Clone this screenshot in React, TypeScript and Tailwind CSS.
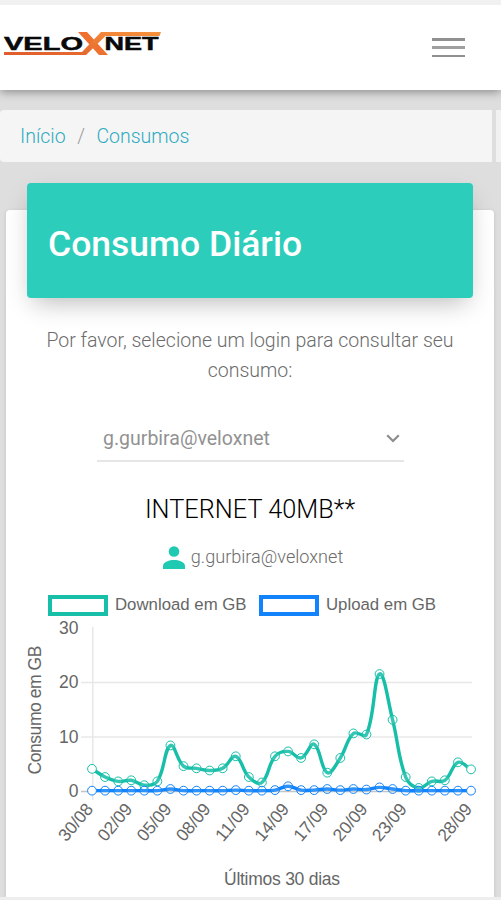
const DOWNLOAD = [
  4.1, 2.6, 1.8, 2.0, 1.1, 1.8, 8.4, 4.6, 4.2, 3.8, 4.2, 6.4, 2.6, 1.6, 6.4, 7.3,
  6.1, 8.6, 3.4, 6.1, 10.6, 10.4, 21.5, 13.1, 2.6, 0.6, 1.8, 2.0, 5.3, 4.0,
];

const UPLOAD = [
  0.1, 0.1, 0.1, 0.1, 0.1, 0.1, 0.4, 0.1, 0.1, 0.1, 0.1, 0.2, 0.1, 0.1, 0.2, 0.9,
  0.2, 0.2, 0.4, 0.2, 0.4, 0.3, 0.7, 0.4, 0.1, 0.1, 0.1, 0.1, 0.1, 0.1,
];

const LABELS = [
  { index: 0, text: "30/08" },
  { index: 3, text: "02/09" },
  { index: 6, text: "05/09" },
  { index: 9, text: "08/09" },
  { index: 12, text: "11/09" },
  { index: 15, text: "14/09" },
  { index: 18, text: "17/09" },
  { index: 21, text: "20/09" },
  { index: 24, text: "23/09" },
  { index: 29, text: "28/09" },
];

const TEAL = "#17bfa9";
const BLUE = "#1283fb";

type Point = { x: number; y: number };

const xAt = (i: number) => 86 + i * 13.07;
const yAt = (value: number) => 174.2 - value * 5.45;

function toPoints(values: number[]): Point[] {
  return values.map((v, i) => ({ x: xAt(i), y: yAt(v) }));
}

/** Cubic spline with a tension of 0.4, clamped to the bottom of the plot area. */
function splinePath(points: Point[]) {
  const controls = points.map((p, i) => {
    const prev = points[Math.max(i - 1, 0)];
    const next = points[Math.min(i + 1, points.length - 1)];
    const d01 = Math.hypot(p.x - prev.x, p.y - prev.y);
    const d12 = Math.hypot(next.x - p.x, next.y - p.y);
    const fa = (0.4 * d01) / (d01 + d12);
    const fb = (0.4 * d12) / (d01 + d12);
    const clamp = (y: number) => Math.min(y, yAt(0));
    return {
      before: { x: p.x - fa * (next.x - prev.x), y: clamp(p.y - fa * (next.y - prev.y)) },
      after: { x: p.x + fb * (next.x - prev.x), y: clamp(p.y + fb * (next.y - prev.y)) },
    };
  });

  return points.reduce((path, p, i) => {
    if (i === 0) return `M${p.x} ${p.y}`;
    const a = controls[i - 1].after;
    const b = controls[i].before;
    return `${path} C${a.x} ${a.y} ${b.x} ${b.y} ${p.x} ${p.y}`;
  }, "");
}

function Series({ values, color }: { values: number[]; color: string }) {
  const points = toPoints(values);
  return (
    <g fill="none" stroke={color}>
      <path d={splinePath(points)} strokeWidth={3.4} strokeLinejoin="round" />
      {points.map((p, i) => (
        <circle
          key={i}
          cx={p.x}
          cy={p.y}
          r={4.4}
          strokeWidth={1}
          fill={i === 0 || i === points.length - 1 ? "#fff" : "rgba(255,255,255,0.12)"}
        />
      ))}
    </g>
  );
}

function UsageChart() {
  return (
    <svg
      width="488"
      height="280"
      viewBox="0 0 488 280"
      className="block shrink-0 font-['Liberation_Sans',Arial,sans-serif] text-[17.5px]"
      fill="#666"
    >
      {[0, 10, 20].map((v) => (
        <line
          key={v}
          x1={75}
          x2={466}
          y1={yAt(v) + 0.3}
          y2={yAt(v) + 0.3}
          stroke={v === 0 ? "#c4c4c4" : "#e8e8e8"}
          strokeWidth={1.4}
        />
      ))}
      <line x1={86.8} x2={86.8} y1={10} y2={183} stroke="#e6e6e6" strokeWidth={1.4} />

      {[0, 10, 20, 30].map((v) => (
        <text key={v} x={72.5} y={yAt(v) + 6} textAnchor="end">
          {v}
        </text>
      ))}

      <text transform="translate(35 93) rotate(-90)" textAnchor="middle" textLength={129}>
        Consumo em GB
      </text>

      <Series values={DOWNLOAD} color={TEAL} />
      <Series values={UPLOAD} color={BLUE} />

      {LABELS.map((label) => (
        <text
          key={label.text}
          transform={`translate(${xAt(label.index) + 2} 192.5) rotate(-50)`}
          textAnchor="end"
          textLength={43}
        >
          {label.text}
        </text>
      ))}

      <text x={276} y={268} textAnchor="middle" textLength={116}>
        Últimos 30 dias
      </text>
    </svg>
  );
}

function Logo() {
  return (
    <svg width="162" height="28" viewBox="0 0 162 28" className="block">
      <defs>
        <linearGradient id="flame" x1="0" x2="1" y1="1" y2="0">
          <stop offset="0" stopColor="#df5a2b" />
          <stop offset="1" stopColor="#f7923c" />
        </linearGradient>
      </defs>
      <g
        className="font-['Liberation_Sans',Arial,sans-serif] text-[18.5px] font-bold"
        fill="#090909"
        stroke="#090909"
        strokeWidth={0.5}
      >
        <text x={4} y={20} textLength={79} lengthAdjust="spacingAndGlyphs">
          VELO
        </text>
        <text x={104.5} y={20} textLength={54} lengthAdjust="spacingAndGlyphs">
          NET
        </text>
      </g>
      <path d="M78 2h9l21 23h-9z" fill="#ee7130" />
      <path d="M4 22h78l19-20h60l-1.5 4h-54L86 25H4z" fill="url(#flame)" />
    </svg>
  );
}

function LegendItem({ label, boxClass, textWidth }: { label: string; boxClass: string; textWidth: string }) {
  return (
    <div className="flex items-center gap-[7px]">
      <span className={`h-[21px] w-[60px] border-4 ${boxClass}`} />
      <span className={`whitespace-nowrap ${textWidth}`}>{label}</span>
    </div>
  );
}

export default function App() {
  return (
    <div className="flex h-[900px] w-[501px] flex-col overflow-hidden bg-[#dedede] font-['Roboto',sans-serif]">
      <header className="z-10 flex h-[90px] shrink-0 items-start justify-between border-t-[5px] border-[#f1f1f1] bg-white pr-9 shadow-[0_2px_9px_rgba(0,0,0,0.38)]">
        <div className="pt-[25px]">
          <Logo />
        </div>
        <button aria-label="Menu" className="mt-[33px] flex w-[33px] flex-col gap-[5.5px]">
          <span className="h-[2.8px] bg-[#909090]" />
          <span className="h-[2.8px] bg-[#a0a0a0]" />
          <span className="h-[2.8px] bg-[#909090]" />
        </button>
      </header>

      <nav className="mt-5 flex h-[52px] shrink-0 justify-between">
        <ol className="flex w-[492px] items-center rounded-l bg-[#f5f5f5] pl-5 pt-px text-[19.5px] font-light text-[#2fabc1]">
          <li>Início</li>
          <li className="px-[11.5px] text-[#999]">/</li>
          <li>Consumos</li>
        </ol>
        <span className="w-[5px] bg-[#f1f1f1]" />
      </nav>

      <main className="mx-1.5 mt-12 flex h-[687px] w-[488px] shrink-0 flex-col rounded-t bg-white shadow-[0_1px_4px_rgba(0,0,0,0.12)]">
        <div className="relative mx-[21px] -mt-[27px] flex h-[115px] shrink-0 items-center rounded bg-[#2dcdbb] pl-[21px] pt-2 shadow-[0_10px_24px_-6px_rgba(0,0,0,0.28)]">
          <h1 className="text-[35.5px] font-medium leading-none text-white">Consumo Diário</h1>
        </div>

        <p className="mx-8 mt-7 shrink-0 text-center text-[19.5px] font-light leading-[29.5px] text-[#6c6c6c]">
          Por favor, selecione um login para consultar seu consumo:
        </p>

        <div className="ml-[91px] mt-[30px] flex h-[47px] w-[307px] shrink-0 items-center justify-between border-b-2 border-[#e6e6e6] pl-1.5 pr-1 pt-0.5 text-[19.5px] text-[#929292]">
          g.gurbira@veloxnet
          <svg width="14" height="9" viewBox="0 0 14 9" fill="none" stroke="#8c8c8c" strokeWidth="2.2">
            <path d="M1.2 1.2 7 7l5.8-5.8" />
          </svg>
        </div>

        <h2 className="mt-8 shrink-0 text-center text-[25.3px] font-light leading-[32px] text-black">
          INTERNET 40MB**
        </h2>

        <div className="mt-[14px] flex h-[34px] shrink-0 items-center justify-center gap-[5px] pl-[5px] text-[18.1px] text-[#6c6c6c]">
          <svg width="24" height="24" viewBox="0 0 24 24" fill="#20c9b1">
            <circle cx="12" cy="6.5" r="5.3" />
            <path d="M1 24v-3.2C1 16.8 7.7 15 12 15s11 1.8 11 5.8V24z" />
          </svg>
          <span className="font-light">g.gurbira@veloxnet</span>
        </div>

        <div className="mt-[19px] flex h-[24px] shrink-0 gap-3 pl-[42px] font-['Liberation_Sans',Arial,sans-serif] text-[16.8px] text-[#666]">
          <LegendItem label="Download em GB" boxClass="border-[#17bfa9]" textWidth="w-[132px]" />
          <LegendItem label="Upload em GB" boxClass="border-[#1283fb]" textWidth="w-[112px]" />
        </div>
        <UsageChart />
      </main>
      <footer className="h-[3px] shrink-0 bg-[#eee]" />
    </div>
  );
}
